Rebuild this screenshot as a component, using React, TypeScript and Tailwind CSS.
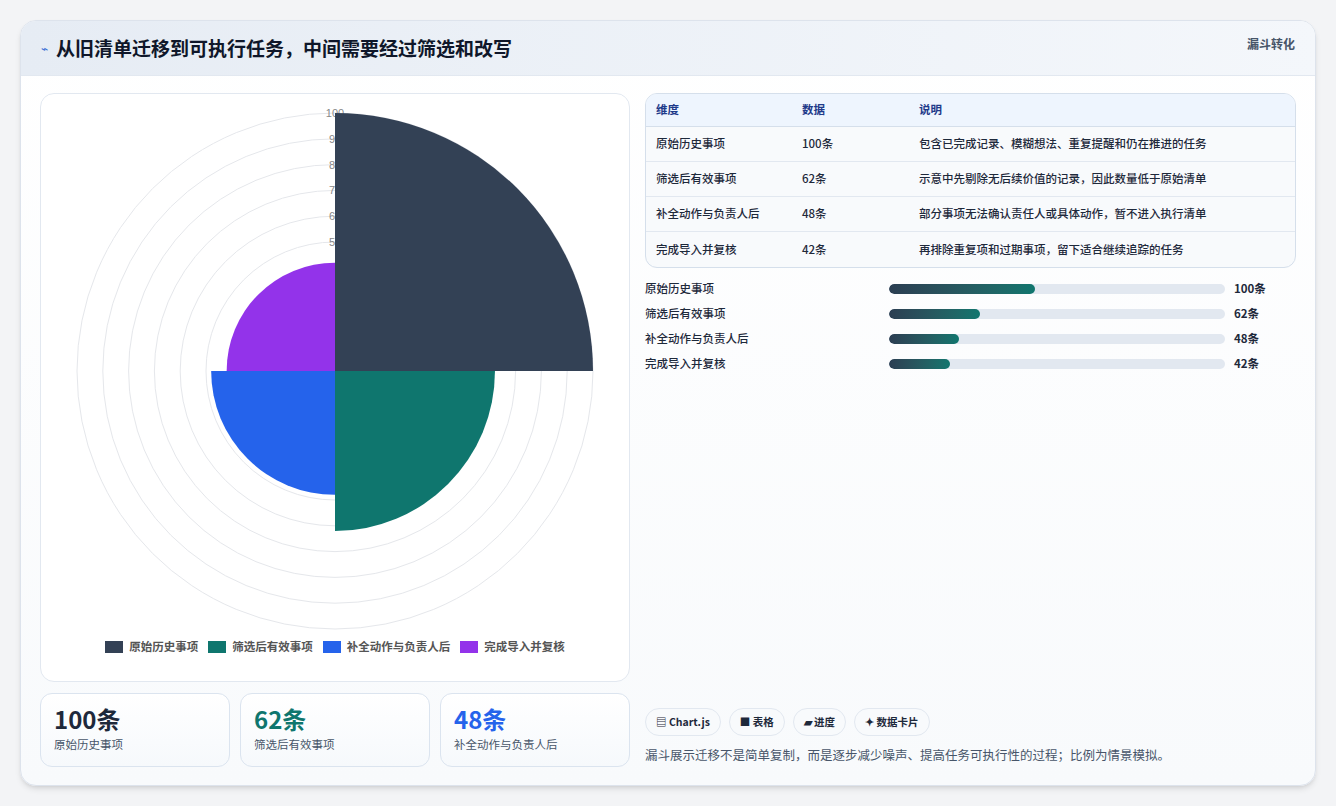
import React from "react";

const C = { x: 294, y: 277 };
const k = 2.58;
function wedge(v: number, a0: number, a1: number) {
  const r = v * k;
  const p = (a: number) => {
    const t = ((a - 90) * Math.PI) / 180;
    return `${C.x + r * Math.cos(t)} ${C.y + r * Math.sin(t)}`;
  };
  return `M${C.x} ${C.y} L${p(a0)} A${r} ${r} 0 0 1 ${p(a1)} Z`;
}

const rows = [
  ["原始历史事项", "100条", "包含已完成记录、模糊想法、重复提醒和仍在推进的任务", 146],
  ["筛选后有效事项", "62条", "示意中先剔除无后续价值的记录，因此数量低于原始清单", 91],
  ["补全动作与负责人后", "48条", "部分事项无法确认责任人或具体动作，暂不进入执行清单", 70],
  ["完成导入并复核", "42条", "再排除重复项和过期事项，留下适合继续追踪的任务", 61],
] as const;

export default function App() {
  return (
    <div className="w-[1336px] h-[806px] bg-[#f3f4f6] p-[20px]" style={{ fontFamily: '"Noto Sans CJK SC", "Noto Sans", sans-serif' }}>
      <div className="h-[766px] rounded-[16px] bg-gradient-to-b from-white to-[#f8fafc] border border-[#dde3ec] shadow-md overflow-hidden flex flex-col">
        <div className="h-[55px] bg-gradient-to-r from-[#e6ecf4] to-[#f4f7fb] border-b border-[#e2e8f0] flex items-center justify-between px-[20px]">
          <div className="flex items-center gap-[8px]">
            <span className="text-[#3b6fd4] text-[12px]">⌁</span>
            <span className="text-[19px] font-bold text-[#0f172a]">从旧清单迁移到可执行任务，中间需要经过筛选和改写</span>
          </div>
          <span className="text-[12px] font-bold text-[#475569] self-start mt-[14px]">漏斗转化</span>
        </div>
        <div className="flex-1 flex px-[19px] pt-[17px] pb-[18px] gap-[15px]">
          <div className="w-[590px] flex flex-col gap-[11px]">
            <div className="h-[589px] rounded-[14px] border border-[#e2e8f0] bg-white flex flex-col items-center">
              <svg width="588" height="540" className="mt-0">
                {[10, 9, 8, 7, 6, 5, 4, 3, 2, 1].map((i) => (
                  <circle key={i} cx={C.x} cy={C.y} r={i * 10 * k} fill="none" stroke="#e5e7eb" strokeWidth="1" />
                ))}
                {[10, 9, 8, 7, 6, 5].map((i) => (
                  <text key={i} x={C.x} y={C.y - i * 10 * k + 4} textAnchor="middle" fontSize="11" fill="#888" fontFamily="Liberation Sans, sans-serif">
                    {i * 10}
                  </text>
                ))}
                <path d={wedge(100, 0, 90)} fill="#334155" />
                <path d={wedge(62, 90, 180)} fill="#0f766e" />
                <path d={wedge(48, 180, 270)} fill="#2563eb" />
                <path d={wedge(42, 270, 360)} fill="#9333ea" />
              </svg>
              <div className="flex gap-[10px] text-[11.5px] text-[#555] font-bold mt-[4px]">
                {[["#334155", "原始历史事项"], ["#0f766e", "筛选后有效事项"], ["#2563eb", "补全动作与负责人后"], ["#9333ea", "完成导入并复核"]].map(([c, t]) => (
                  <div key={t} className="flex items-center gap-[6px]">
                    <span className="w-[18px] h-[12px] inline-block" style={{ background: c }} />
                    {t}
                  </div>
                ))}
              </div>
            </div>
            <div className="flex gap-[10px]">
              {[["100条", "#1e293b", "原始历史事项"], ["62条", "#0f766e", "筛选后有效事项"], ["48条", "#2563eb", "补全动作与负责人后"]].map(([v, c, l]) => (
                <div key={v} className="w-[190px] h-[74px] rounded-[12px] border border-[#dbe4ef] bg-gradient-to-b from-white to-[#f6f9fc] px-[13px] pt-[10px]">
                  <div className="text-[24px] font-bold leading-[30px]" style={{ color: c }}>{v}</div>
                  <div className="text-[11.5px] text-[#475569] mt-[2px]">{l}</div>
                </div>
              ))}
            </div>
          </div>
          <div className="flex-1 flex flex-col">
            <div className="rounded-[12px] border border-[#d5dfeb] overflow-hidden bg-[#f8fafc] text-[11.5px]">
              <div className="flex h-[33px] items-center bg-[#eef5fe] border-b border-[#d5dfeb] text-[#1e3a8a] font-bold">
                <div className="w-[156px] pl-[10px]">维度</div>
                <div className="w-[117px]">数据</div>
                <div>说明</div>
              </div>
              {rows.map((r, i) => (
                <div key={i} className={`flex h-[35px] items-center text-[#1e293b] font-medium ${i < 3 ? "border-b border-[#e2e8f0]" : ""}`}>
                  <div className="w-[156px] pl-[10px]">{r[0]}</div>
                  <div className="w-[117px]">{r[1]}</div>
                  <div>{r[2]}</div>
                </div>
              ))}
            </div>
            <div className="mt-[8px] flex flex-col">
              {rows.map((r, i) => (
                <div key={i} className="flex items-center h-[25px] text-[11.5px] font-medium text-[#1e293b]">
                  <div className="w-[244px]">{r[0]}</div>
                  <div className="w-[336px] h-[10px] rounded-full bg-[#e2e8f0] overflow-hidden">
                    <div className="h-full rounded-full bg-gradient-to-r from-[#2b3e52] to-[#0f766e]" style={{ width: r[3] }} />
                  </div>
                  <div className="ml-[9px] font-bold">{r[1]}</div>
                </div>
              ))}
            </div>
            <div className="flex-1" />
            <div className="flex gap-[8px] text-[10.5px] font-bold text-[#1e293b]">
              {["▤ Chart.js", "■ 表格", "▰ 进度", "✦ 数据卡片"].map((t) => (
                <span key={t} className="h-[28px] px-[10px] rounded-full border border-[#e2e8f0] bg-[#f8fafc] flex items-center">{t}</span>
              ))}
            </div>
            <div className="text-[12.5px] text-[#475569] mt-[10px] mb-[2px]">漏斗展示迁移不是简单复制，而是逐步减少噪声、提高任务可执行性的过程；比例为情景模拟。</div>
          </div>
        </div>
      </div>
    </div>
  );
}
